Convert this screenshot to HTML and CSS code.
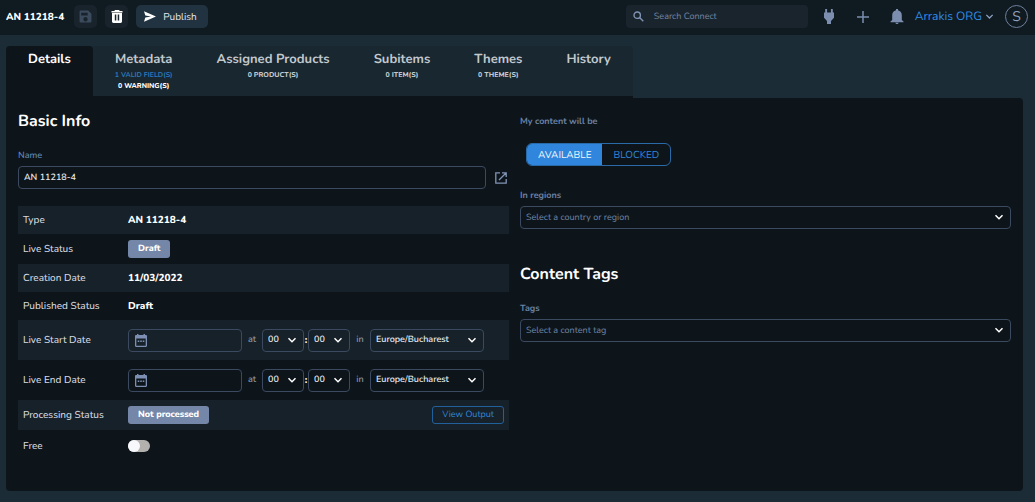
FILE: index.html
```html
<!DOCTYPE html>
<html lang="en">
<head>
<meta charset="utf-8">
<title>AN 11218-4</title>
<link rel="stylesheet" href="styles.css">
</head>
<body>
<svg class="defs" aria-hidden="true">
  <symbol id="chevron" viewBox="0 0 10 10"><path d="M1.500 3.200 5 6.700l3.500-3.500" fill="none" stroke="currentColor" stroke-width="1.500"/></symbol>
  <symbol id="calendar" viewBox="0 0 12 13"><path fill="currentColor" fill-rule="evenodd" d="M2 0h1.500v1h5V0H10v1h.8c.7 0 1.200.5 1.200 1.200v9.600c0 .7-.5 1.200-1.200 1.200H1.200C.5 13 0 12.500 0 11.800V2.200C0 1.500.5 1 1.200 1H2zM1.300 4.500v7.200h9.400V4.500zM2.700 6.500h1.600V8H2.700zm2.500 0h1.600V8H5.200zm2.500 0h1.600V8H7.700z"/></symbol>
</svg>

<header class="topbar">
  <h1 class="topbar-title">AN 11218-4</h1>
  <button class="icon-button" type="button" aria-label="Save" disabled>
    <svg width="13" height="13" viewBox="0 0 24 24"><path fill="currentColor" fill-rule="evenodd" d="M3 1h14l6 6v14a2 2 0 0 1-2 2H3a2 2 0 0 1-2-2V3a2 2 0 0 1 2-2zm1 4v5h12V5zm8 8a4 4 0 1 0 0 8 4 4 0 0 0 0-8z"/></svg>
  </button>
  <button class="icon-button icon-button-light" type="button" aria-label="Delete">
    <svg width="12" height="13" viewBox="0 0 12 13"><path fill="currentColor" fill-rule="evenodd" d="M4 0h4l.7 1H11.500v1.500H.5V1h2.800zM1 3h10v8.600c0 .8-.6 1.400-1.400 1.400H2.400C1.600 13 1 12.400 1 11.600zm2.800 1.500v6h1.500v-6zm2.900 0v6h1.500v-6z"/></svg>
  </button>
  <button class="publish" type="button">
    <svg width="12" height="11" viewBox="0 0 12 11"><path fill="currentColor" d="M0 .3 12 5.500 0 10.700l1.300-4.300L7 5.500 1.300 4.600z"/></svg>
    Publish
  </button>
  <label class="search">
    <svg width="11" height="11" viewBox="0 0 11 11" fill="none" stroke="currentColor" stroke-width="1.400"><circle cx="4.200" cy="4.200" r="3.200"/><path d="m6.600 6.600 3.700 3.700"/></svg>
    <input type="search" placeholder="Search Connect" aria-label="Search Connect">
  </label>
  <nav class="tools">
    <button class="tool" type="button" aria-label="Integrations"><svg width="12" height="15" viewBox="0 0 12 15"><path fill="currentColor" d="M2.200 0h1.900v3.500h3.800V0h1.900v3.500H11v5.300L8 12v3H4v-3L1 8.800V3.500h1.200z"/></svg></button>
    <button class="tool" type="button" aria-label="Add"><svg width="12" height="12" viewBox="0 0 12 12"><path d="M6 0v12M0 6h12" stroke="currentColor" stroke-width="1.500"/></svg></button>
    <button class="tool" type="button" aria-label="Notifications"><svg width="14" height="15" viewBox="0 0 14 15"><path fill="currentColor" d="M6 0h2v1.300c2.500.5 3.800 2.500 3.800 5V11l1.700 1.500v.8H.5v-.8L2.200 11V6.300c0-2.500 1.300-4.500 3.800-5zM5.300 13.800h3.400c-.2.800-.9 1.200-1.700 1.200s-1.500-.4-1.700-1.200z"/></svg></button>
  </nav>
  <button class="org" type="button">Arrakis ORG <svg width="9" height="9"><use href="#chevron"/></svg></button>
  <button class="avatar" type="button">S</button>
</header>

<main class="page">
  <nav class="tabs">
    <a class="tab tab-active" href="#details">Details</a>
    <a class="tab" href="#metadata">Metadata<small class="tab-note tab-note-blue">1 VALID FIELD(S)</small><small class="tab-note tab-note-white">0 WARNING(S)</small></a>
    <a class="tab" href="#products">Assigned Products<small class="tab-note">0 PRODUCT(S)</small></a>
    <a class="tab" href="#subitems">Subitems<small class="tab-note">0 ITEM(S)</small></a>
    <a class="tab" href="#themes">Themes<small class="tab-note">0 THEME(S)</small></a>
    <a class="tab" href="#history">History</a>
  </nav>

  <div class="panel" id="details">
    <section class="column">
      <h2 class="heading">Basic Info</h2>
      <label class="caption caption-name" for="name">Name</label>
      <div class="name-row">
        <input class="field name-field" id="name" type="text" value="AN 11218-4">
        <button class="open-link" type="button" aria-label="Open in new window"><svg width="12" height="12" viewBox="0 0 12 12" fill="none" stroke="currentColor" stroke-width="1.300"><path d="M5 .8H.8v10.400h10.400V7M7 .8h4.200V5M11 1 4 8"/></svg></button>
      </div>

      <dl class="facts">
        <div class="fact"><dt>Type</dt><dd>AN 11218-4</dd></div>
        <div class="fact fact-badge"><dt>Live Status</dt><dd><span class="badge">Draft</span></dd></div>
        <div class="fact"><dt>Creation Date</dt><dd>11/03/2022</dd></div>
        <div class="fact"><dt>Published Status</dt><dd>Draft</dd></div>
        <div class="fact fact-field">
          <dt><label for="start">Live Start Date</label></dt>
          <dd>
            <span class="date"><svg width="12" height="13"><use href="#calendar"/></svg><input class="field" id="start" type="text"></span>
            <span class="joiner">at</span>
            <span class="choice choice-time"><select class="field" aria-label="Start hour"><option>00</option></select><svg width="10" height="10"><use href="#chevron"/></svg></span>
            <span class="colon">:</span>
            <span class="choice choice-time"><select class="field" aria-label="Start minute"><option>00</option></select><svg width="10" height="10"><use href="#chevron"/></svg></span>
            <span class="joiner">in</span>
            <span class="choice choice-zone"><select class="field" aria-label="Start time zone"><option>Europe/Bucharest</option></select><svg width="10" height="10"><use href="#chevron"/></svg></span>
          </dd>
        </div>
        <div class="fact fact-field">
          <dt><label for="end">Live End Date</label></dt>
          <dd>
            <span class="date"><svg width="12" height="13"><use href="#calendar"/></svg><input class="field" id="end" type="text"></span>
            <span class="joiner">at</span>
            <span class="choice choice-time"><select class="field" aria-label="End hour"><option>00</option></select><svg width="10" height="10"><use href="#chevron"/></svg></span>
            <span class="colon">:</span>
            <span class="choice choice-time"><select class="field" aria-label="End minute"><option>00</option></select><svg width="10" height="10"><use href="#chevron"/></svg></span>
            <span class="joiner">in</span>
            <span class="choice choice-zone"><select class="field" aria-label="End time zone"><option>Europe/Bucharest</option></select><svg width="10" height="10"><use href="#chevron"/></svg></span>
          </dd>
        </div>
        <div class="fact fact-badge"><dt>Processing Status</dt><dd><span class="badge">Not processed</span><button class="output" type="button">View Output</button></dd></div>
        <div class="fact fact-switch"><dt><label for="free">Free</label></dt><dd><input class="switch" id="free" type="checkbox" role="switch"></dd></div>
      </dl>
    </section>

    <section class="column">
      <div class="caption caption-top" id="availability">My content will be</div>
      <div class="toggle" role="group" aria-labelledby="availability">
        <button class="toggle-option toggle-on" type="button" aria-pressed="true">AVAILABLE</button>
        <button class="toggle-option" type="button" aria-pressed="false">BLOCKED</button>
      </div>
      <label class="caption" for="regions">In regions</label>
      <span class="choice choice-wide"><select class="field" id="regions"><option>Select a country or region</option></select><svg width="10" height="10"><use href="#chevron"/></svg></span>
      <h2 class="heading heading-tags">Content Tags</h2>
      <label class="caption" for="tags">Tags</label>
      <span class="choice choice-wide"><select class="field" id="tags"><option>Select a content tag</option></select><svg width="10" height="10"><use href="#chevron"/></svg></span>
    </section>
  </div>
</main>
</body>
</html>
```
FILE: styles.css
```css
* { box-sizing: border-box; }

body {
  margin: 0;
  min-height: 100vh;
  display: flex;
  flex-direction: column;
  background: #1b2c37;
  color: #d5dae0;
  font-family: Nunito, Lato, "Open Sans", sans-serif;
  font-size: 10px;
  line-height: 14px;
  text-rendering: geometricPrecision;
}

button, input, select { margin: 0; font: inherit; color: inherit; text-rendering: inherit; }
button { padding: 0; border: 0; background: none; }
svg { display: block; flex: none; }
.defs { position: absolute; width: 0; height: 0; }

.topbar {
  display: flex;
  align-items: center;
  height: 35px;
  padding: 0 7px 2px 6px;
  background: #0f1a21;
}
.topbar-title { margin: 0 10px 0 0; color: #fff; font-size: 10px; font-weight: 800; white-space: nowrap; }
.icon-button {
  display: grid;
  place-items: center;
  width: 23px;
  height: 23px;
  margin-right: 8px;
  border-radius: 5px;
  background: #18232c;
  color: #3c4a5d;
}
.icon-button-light { color: #fff; }
.publish {
  display: flex;
  align-items: center;
  gap: 7px;
  height: 23px;
  padding: 0 11px 0 8px;
  border-radius: 5px;
  background: #213240;
  color: #e4e9ee;
}
.publish svg { color: #fff; }
.search {
  display: flex;
  align-items: center;
  gap: 10px;
  width: 182px;
  height: 23px;
  margin-left: auto;
  padding: 0 7px;
  border-radius: 4px;
  background: #1a242d;
  color: #7f92b2;
}
.search input { flex: 1; min-width: 0; padding: 0; border: 0; outline: 0; background: none; font-size: 9px; }
.search input::placeholder { color: #7287a6; opacity: 1; }
.tools { display: flex; gap: 20px; margin: 0 11px 0 14px; }
.tool { display: grid; place-items: center; width: 14px; color: #7c8eb0; }
.org { display: flex; align-items: center; gap: 3px; margin-right: 11px; color: #2f8de4; font-size: 12px; }
.org svg { color: #8ca0c0; }
.avatar { width: 23px; height: 23px; border: 1px solid #6f809e; border-radius: 50%; color: #8fa0bd; font-size: 14px; }

.page { flex: 1; display: flex; flex-direction: column; padding: 11px 12px 11px 6px; }

.tabs {
  display: flex;
  align-self: flex-start;
  height: 52px;
  border-bottom: 2px solid #0d151b;
  border-radius: 4px 4px 0 0;
  background: #182730;
}
.tab {
  display: flex;
  flex-direction: column;
  align-items: center;
  padding: 5px 22px 0;
  color: #c3c8cd;
  font-size: 13px;
  line-height: 17px;
  font-weight: 700;
  text-decoration: none;
}
.tab-active { border-radius: 4px 4px 0 0; background: #0d151b; color: #fff; }
.tab-note { color: #c3c8cd; font-size: 7px; line-height: 11px; font-weight: 800; padding-top: 2px; }
.tab-note + .tab-note { padding-top: 0; }
.tab-note-blue { color: #2c79b8; font-weight: 700; }
.tab-note-white { color: #fff; }

.panel {
  flex: 1;
  display: grid;
  grid-template-columns: 1fr 1fr;
  gap: 11px;
  padding: 12px 12px 24px 12px;
  border-radius: 0 4px 4px 4px;
  background: #0d151b;
}
.column { min-width: 0; }
.heading { margin: 0 0 18px; color: #fff; font-size: 16px; line-height: 22px; font-weight: 700; }
.caption { display: block; margin-bottom: 4px; color: #6c82a3; font-size: 9px; line-height: 12px; font-weight: 700; }
.caption-name { font-weight: 600; color: #5d86b0; }

.field {
  width: 100%;
  height: 23px;
  padding: 0 5px;
  border: 1px solid #3b4a60;
  border-radius: 4px;
  outline: 0;
  background: transparent;
  color: #e6eaee;
  font-size: 9px;
}
select.field { appearance: none; }
.name-field { font-weight: 600; }
.name-row { display: flex; align-items: center; gap: 9px; padding-right: 2px; }
.open-link { color: #8294b5; }

.facts { margin: 17px 0 0; }
.fact { display: grid; grid-template-columns: 105px 1fr; align-items: center; height: 28px; padding: 0 5px; font-weight: 500; }
.fact:nth-child(odd) { background: #172129; }
.fact-badge { height: 30px; }
.fact-field { height: 40px; }
.fact-switch { height: 32px; }
.fact dd { display: flex; align-items: center; margin: 0; color: #fff; font-weight: 800; }
.badge {
  padding: 2px 10px;
  border-radius: 3px;
  background: #7487a8;
  color: #fff;
  font-size: 9px;
}
.date { position: relative; width: 114px; }
.date svg { position: absolute; left: 7px; top: 5px; color: #7c8fb3; }
.date .field { padding-left: 26px; display: block; }
.joiner { width: 20px; color: #8b97a6; font-size: 9px; font-weight: 600; text-align: center; }
.colon { width: 4px; font-size: 10px; text-align: center; }
.choice { position: relative; display: block; color: #fff; }
.choice svg { position: absolute; right: 7px; top: 6px; pointer-events: none; }
.choice .field { display: block; font-weight: 600; }
.choice-time { width: 42px; }
.choice-zone { width: 114px; }
.choice-wide .field { color: #7087a6; font-weight: 400; }
.output {
  margin-left: auto;
  padding: 1px 9px;
  border: 1px solid #22609b;
  border-radius: 3px;
  color: #3289da;
  font-size: 9px;
  font-weight: 400;
}
.switch {
  appearance: none;
  width: 22px;
  height: 12px;
  border-radius: 6px;
  background: #b3b1ae;
}
.switch::before { content: ""; display: block; width: 12px; height: 12px; border-radius: 50%; background: #f6f8fb; }
.switch:checked::before { margin-left: auto; }

.caption-top { margin: 6px 0 15px; }
.toggle {
  display: flex;
  width: fit-content;
  height: 23px;
  margin: 0 6px 24px;
  overflow: hidden;
  border: 1px solid #2a6aa8;
  border-radius: 6px;
}
.toggle-option { padding: 0 11px; color: #3087d8; }
.toggle-on { background: #2f86dc; color: #eef5fc; }
.heading-tags { margin-top: 34px; }
```
